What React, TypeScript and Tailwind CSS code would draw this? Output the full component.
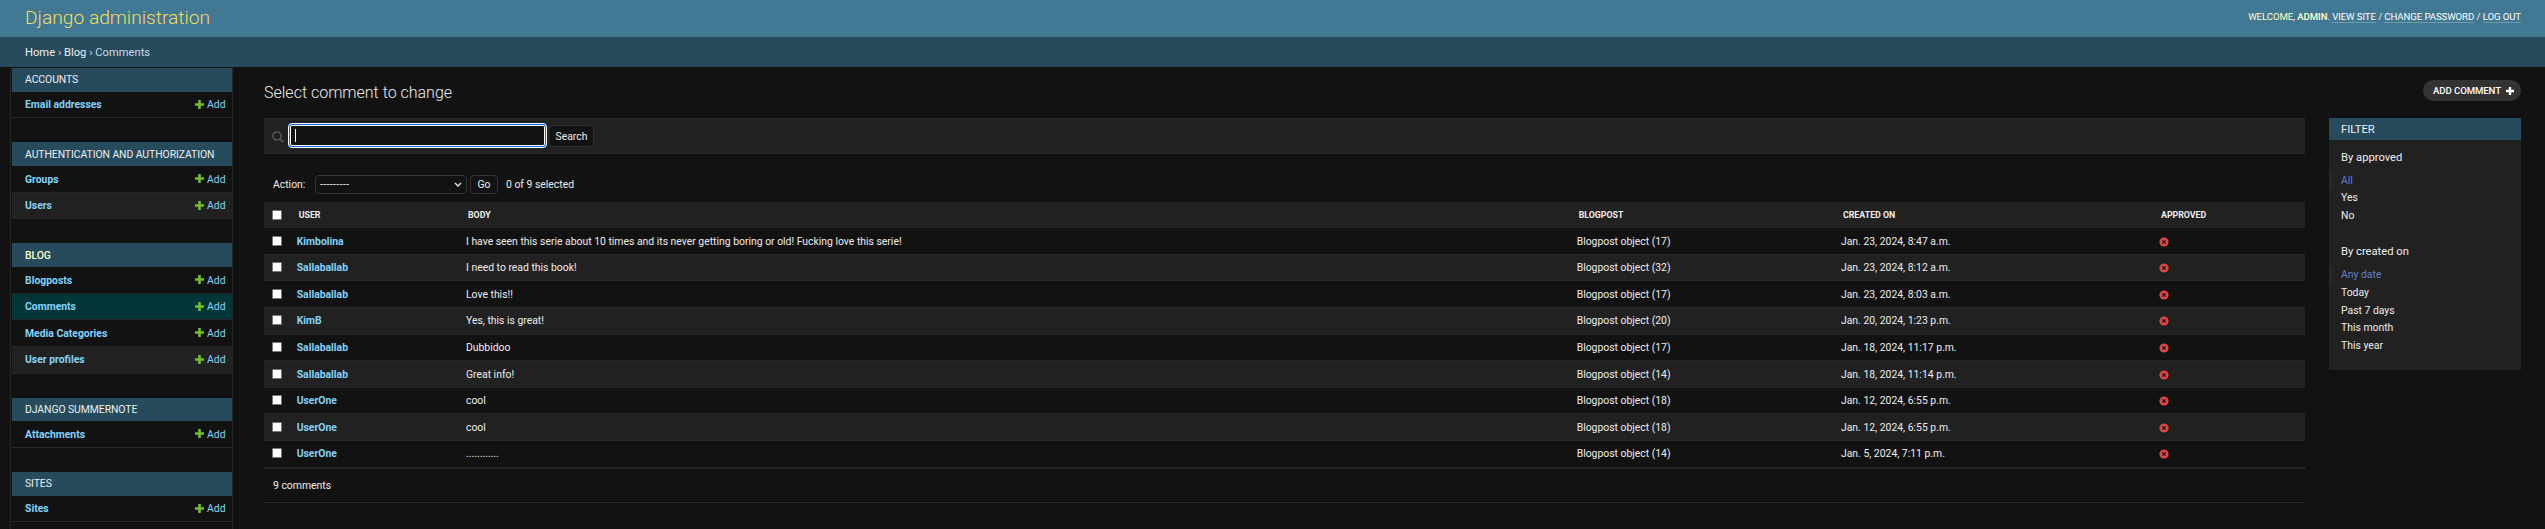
import React from "react";

type SideItem = { label: string; h: string; pad: string; bg?: string };
type SideApp = { name: string; head: string; nameColor?: string; items: SideItem[] };

const apps: SideApp[] = [
  { name: "ACCOUNTS", head: "h-6 pt-[5px]", items: [{ label: "Email addresses", h: "h-[26px]", pad: "mt-[6px]" }] },
  {
    name: "AUTHENTICATION AND AUTHORIZATION",
    head: "h-6 pt-[6px]",
    items: [
      { label: "Groups", h: "h-[27px]", pad: "mt-[7px]" },
      { label: "Users", h: "h-[26px]", pad: "mt-[6px]", bg: "bg-[#212121]" },
    ],
  },
  {
    name: "BLOG",
    head: "h-6 pt-[6px]",
    nameColor: "text-[#ffffcc] font-medium",
    items: [
      { label: "Blogposts", h: "h-[27px]", pad: "mt-[7px]" },
      { label: "Comments", h: "h-[26px]", pad: "mt-[6px]", bg: "bg-[#013639]" },
      { label: "Media Categories", h: "h-[27px]", pad: "mt-[7px]" },
      { label: "User profiles", h: "h-[27px]", pad: "mt-[6px]", bg: "bg-[#212121]" },
    ],
  },
  { name: "DJANGO SUMMERNOTE", head: "h-[23px] pt-[5px]", items: [{ label: "Attachments", h: "h-[27px]", pad: "mt-[7px]" }] },
  { name: "SITES", head: "h-6 pt-[5px]", items: [{ label: "Sites", h: "h-[26px]", pad: "mt-[6px]" }] },
];

const rows = [
  { user: "Kimbolina", body: "I have seen this serie about 10 times and its never getting boring or old! Fucking love this serie!", post: 17, date: "Jan. 23, 2024, 8:47 a.m.", h: "h-[27px] pt-[7px]" },
  { user: "Sallaballab", body: "I need to read this book!", post: 32, date: "Jan. 23, 2024, 8:12 a.m.", h: "h-[26px] pt-[6px]" },
  { user: "Sallaballab", body: "Love this!!", post: 17, date: "Jan. 23, 2024, 8:03 a.m.", h: "h-[27px] pt-[7px]" },
  { user: "KimB", body: "Yes, this is great!", post: 20, date: "Jan. 20, 2024, 1:23 p.m.", h: "h-[27px] pt-[6px]" },
  { user: "Sallaballab", body: "Dubbidoo", post: 17, date: "Jan. 18, 2024, 11:17 p.m.", h: "h-[26px] pt-[6px]" },
  { user: "Sallaballab", body: "Great info!", post: 14, date: "Jan. 18, 2024, 11:14 p.m.", h: "h-[27px] pt-[7px]" },
  { user: "UserOne", body: "cool", post: 18, date: "Jan. 12, 2024, 6:55 p.m.", h: "h-[26px] pt-[6px]" },
  { user: "UserOne", body: "cool", post: 18, date: "Jan. 12, 2024, 6:55 p.m.", h: "h-[27px] pt-[7px]" },
  { user: "UserOne", body: "............", post: 14, date: "Jan. 5, 2024, 7:11 p.m.", h: "h-[27px] pt-[6px]" },
];

const cols = "grid grid-cols-[32.7px_169.3px_1110.7px_264.3px_319px_1fr] items-start";

function PlusIcon({ className }: { className: string }) {
  return (
    <svg viewBox="0 0 9 9" className={className} fill="currentColor">
      <path d="M3.2 0h2.6v3.2H9v2.6H5.8V9H3.2V5.8H0V3.2h3.2z" />
    </svg>
  );
}

function Box({ className = "" }: { className?: string }) {
  return <span className={`ml-2 block size-[10px] rounded-[1px] border border-[#767676] bg-white ${className}`} />;
}

function SideModule({ app }: { app: SideApp }) {
  return (
    <div className="mb-6">
      <div className={`bg-[#264b5d] pl-[13px] tracking-[-0.06px] whitespace-nowrap ${app.head} ${app.nameColor ?? "text-[#eeeeee]"}`}>
        {app.name}
      </div>
      {app.items.map((it) => (
        <div key={it.label} className={`flex items-start border-b border-[#272727] pr-[7px] pl-[13px] text-[#81d4fa] ${it.h} ${it.bg ?? ""}`}>
          <span className={`flex-1 font-bold ${it.pad}`}>{it.label}</span>
          <PlusIcon className="mt-2 mr-[3px] size-[9px] text-[#70bf2b]" />
          <span className={`w-[18px] ${it.pad}`}>Add</span>
        </div>
      ))}
    </div>
  );
}

function FilterGroup({ title, items }: { title: string; items: [string, string][] }) {
  return (
    <>
      <h3 className="pl-3 text-[11.2px] leading-[13px]">By {title}</h3>
      <ul className="mt-2">
        {items.map(([t, h], i) => (
          <li key={t} className={`pt-[2px] ${h} ${i === 0 ? "border-l-4 border-[#272727] pl-2 text-[#5e81c8]" : "pl-3"}`}>
            {t}
          </li>
        ))}
      </ul>
    </>
  );
}

export default function App() {
  return (
    <div className="flex h-[529px] w-[2545px] flex-col overflow-hidden bg-[#121212] font-['Roboto',sans-serif] text-[10.4px] leading-[13px] text-[#eeeeee]">
      <header className="flex h-[37px] shrink-0 items-start justify-between bg-[#417893] pr-6 pl-[25px]">
        <h1 className="mt-[6px] text-[19.2px] leading-[23px] font-light text-[#f5dd5d]">Django administration</h1>
        <div className="mt-[11px] flex text-[9.6px] leading-[11px] tracking-[-0.08px] text-[#ffffcc]">
          <span>WELCOME,&nbsp;</span>
          <strong className="font-medium">ADMIN</strong>
          <span>.&nbsp;</span>
          <a className="border-b border-white/25 text-white">VIEW SITE</a>
          <span>&nbsp;/&nbsp;</span>
          <a className="border-b border-white/25 text-white">CHANGE PASSWORD</a>
          <span>&nbsp;/&nbsp;</span>
          <a className="border-b border-white/25 text-white">LOG OUT</a>
        </div>
      </header>
      <nav className="flex h-[30px] shrink-0 items-start bg-[#264b5d] pt-[9px] pl-[25px] text-[11.2px] leading-[13px] text-[#c4dce8]">
        <span className="text-[#eeeeee]">Home</span>&nbsp;›&nbsp;<span className="text-[#eeeeee]">Blog</span>&nbsp;›&nbsp;Comments
      </nav>

      <div className="flex min-h-0 flex-1">
        <aside className="ml-[10px] w-[223px] shrink-0 overflow-hidden border-x border-[#272727] pt-px pl-px">
          {apps.map((a) => (
            <SideModule key={a.name} app={a} />
          ))}
        </aside>

        <main className="ml-[31px] flex w-[2257px] shrink-0 flex-col">
          <div className="flex h-[51px] items-start justify-between">
            <h2 className="mt-4 text-[16px] leading-[19px] font-light">Select comment to change</h2>
            <a className="mt-[13px] flex h-[21px] w-[98px] items-start justify-between rounded-full bg-[#333333] pt-[5px] pr-[7px] pl-[10px] text-[9.6px] leading-[11px] font-medium tracking-[-0.08px] text-white">
              ADD COMMENT
              <PlusIcon className="mt-[2px] size-2" />
            </a>
          </div>

          <div className="flex items-start justify-between">
            <section className="w-[2041px]">
              <div className="flex h-9 items-start border-y border-[#272727] bg-[#212121] pl-2">
                <svg viewBox="0 0 12 12" className="mt-3 size-3 text-[#555555]" fill="none" stroke="currentColor" strokeWidth="1.6">
                  <circle cx="5" cy="5" r="4" />
                  <path d="M7.9 7.9l3.3 3.3" strokeWidth="1.9" />
                </svg>
                <div className="mt-1 ml-1 h-[25px] w-[259px] rounded-[4px] border border-white bg-[#1062d8] p-px">
                  <div className="flex h-full items-center rounded-[2px] border border-white bg-[#121212] pl-1">
                    <span className="h-[13px] w-px bg-white" />
                  </div>
                </div>
                <button className="mt-[6px] ml-[2px] flex h-[22px] w-[45px] items-start justify-center rounded-[4px] border border-[#2e2e2e] bg-[#121212] pt-1">
                  Search
                </button>
              </div>

              <div className="mt-[21px] flex h-[19px] items-start pl-[9px]">
                <span className="w-[42px] pt-[3px]">Action:</span>
                <div className="flex h-[19px] w-[152px] items-start justify-between rounded-[4px] border border-[#353535] px-1">
                  <span className="pt-[2px] tracking-[0.4px]">---------</span>
                  <svg viewBox="0 0 8 6" className="mt-[6px] h-[6px] w-2" fill="none" stroke="currentColor" strokeWidth="1.3">
                    <path d="M1 1l3 3 3-3" />
                  </svg>
                </div>
                <button className="ml-[3px] flex h-[19px] w-7 items-start justify-center rounded-[4px] border border-[#353535] pt-[2px]">Go</button>
                <span className="ml-2 pt-[3px]">0 of 9 selected</span>
              </div>

              <div className={`${cols} mt-2 h-[26px] border-y border-[#272727] bg-[#212121] pt-[7px] text-[8.8px] leading-[10px] font-bold`}>
                <Box />
                <span className="pl-[2px]">USER</span>
                <span className="pl-[2px]">BODY</span>
                <span className="pl-[2px]">BLOGPOST</span>
                <span className="pl-[2px]">CREATED ON</span>
                <span className="pl-[1px]">APPROVED</span>
              </div>
              {rows.map((r, i) => (
                <div key={i} className={`${cols} ${r.h} border-b border-[#272727] ${i % 2 ? "bg-[#212121]" : ""}`}>
                  <Box className="mt-px" />
                  <span className="font-bold text-[#81d4fa]">{r.user}</span>
                  <span>{r.body}</span>
                  <span>Blogpost object ({r.post})</span>
                  <span>{r.date}</span>
                  <svg viewBox="0 0 10 10" className="mt-[2px] ml-[-0.6px] size-[10px]">
                    <circle cx="5" cy="5" r="4.6" fill="#e04545" />
                    <path d="M3.4 3.4l3.2 3.2M6.6 3.4L3.4 6.6" stroke="#161616" strokeWidth="1.3" />
                  </svg>
                </div>
              ))}
              <div className="h-[35px] border-y border-[#272727] pt-[10px] pl-[9px]">9 comments</div>
            </section>

            <aside className="h-[252px] w-48 bg-[#212121]">
              <h2 className="h-[22px] bg-[#264b5d] pt-[5px] pl-3 text-[11.2px] leading-[13px]">FILTER</h2>
              <div className="border-b border-[#272727] pt-[11px] pb-[11px]">
                <FilterGroup title="approved" items={[["All", "h-[17px]"], ["Yes", "h-[18px]"], ["No", "h-[18px]"]]} />
              </div>
              <div className="pt-2">
                <FilterGroup
                  title="created on"
                  items={[
                    ["Any date", "h-[18px]"],
                    ["Today", "h-[18px]"],
                    ["Past 7 days", "h-[17px]"],
                    ["This month", "h-[18px]"],
                    ["This year", "h-[18px]"],
                  ]}
                />
              </div>
            </aside>
          </div>
        </main>
      </div>
    </div>
  );
}
